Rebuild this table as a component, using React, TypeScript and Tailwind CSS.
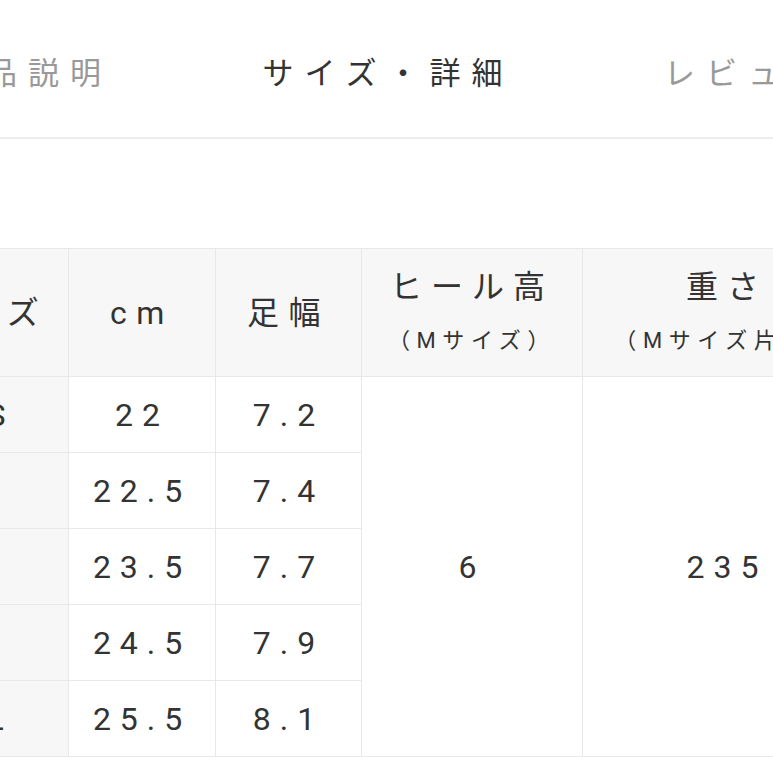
const tabs = [
  { label: "商品説明", active: false },
  { label: "サイズ・詳細", active: true },
  { label: "レビュー", active: false },
];

const rows = [
  { size: "SS", cm: "22", width: "7.2" },
  { size: "S", cm: "22.5", width: "7.4" },
  { size: "M", cm: "23.5", width: "7.7" },
  { size: "L", cm: "24.5", width: "7.9" },
  { size: "LL", cm: "25.5", width: "8.1" },
];

const font = { fontFamily: 'Roboto, "Noto Sans CJK JP", sans-serif' };

export default function App() {
  return (
    <div className="w-full overflow-hidden bg-white text-[#333]" style={font}>
      {/* tab bar */}
      <div className="border-b-2 border-[#ececec]">
        <div className="flex h-[137px] ml-[-152px] pt-[12px]">
          {tabs.map((tab) => (
            <div
              key={tab.label}
              className={`w-[360px] shrink-0 flex items-center justify-center text-[31px] tracking-[11px] ${
                tab.active ? "text-[#333]" : "text-[#999]"
              }`}
            >
              {tab.label}
            </div>
          ))}
        </div>
      </div>

      {/* size table */}
      <div className="pt-[109px] pb-[20px]">
        <table className="table-fixed border-collapse ml-[-96px] w-[1017px]">
          <colgroup>
            <col className="w-[164px]" />
            <col className="w-[147px]" />
            <col className="w-[146px]" />
            <col className="w-[221px]" />
            <col className="w-[339px]" />
          </colgroup>
          <thead>
            <tr className="h-[128px] bg-[#f7f7f7]">
              <th className="border border-[#e8e8e8] font-normal text-[32px] tracking-[0.3em] text-center">
                サイズ
              </th>
              <th className="border border-[#e8e8e8] font-normal text-[32px] tracking-[0.3em] text-center">
                cm
              </th>
              <th className="border border-[#e8e8e8] font-normal text-[32px] tracking-[0.3em] text-center">
                足幅
              </th>
              <th className="border border-[#e8e8e8] font-normal text-center">
                <div className="text-[32px] tracking-[0.28em] leading-[40px] mt-[-4px]">ヒール高</div>
                <div className="text-[22px] tracking-[0.3em] leading-[28px] mt-[20px]">（Mサイズ）</div>
              </th>
              <th className="border border-[#e8e8e8] font-normal text-center">
                <div className="w-[288px] mt-[-4px]">
                  <div className="text-[32px] tracking-[0.28em] leading-[40px]">重さ</div>
                  <div className="text-[22px] tracking-[0.3em] leading-[28px] mt-[20px] whitespace-nowrap">
                    （Mサイズ片足）
                  </div>
                </div>
              </th>
            </tr>
          </thead>
          <tbody>
            {rows.map((row, i) => (
              <tr key={row.size} className="h-[76px]">
                <td className="border border-[#e8e8e8] bg-[#f7f7f7] text-center text-[32px] tracking-[0.28em]">
                  {row.size}
                </td>
                <td className="border border-[#e8e8e8] text-center text-[32px] tracking-[0.28em]">
                  {row.cm}
                </td>
                <td className="border border-[#e8e8e8] text-center text-[32px] tracking-[0.28em]">
                  {row.width}
                </td>
                {i === 0 && (
                  <>
                    <td rowSpan={5} className="border border-[#e8e8e8] text-center text-[32px] tracking-[0.28em]">
                      6
                    </td>
                    <td rowSpan={5} className="border border-[#e8e8e8] text-[32px] tracking-[0.28em]">
                      <div className="w-[288px] text-center">235</div>
                    </td>
                  </>
                )}
              </tr>
            ))}
          </tbody>
        </table>
      </div>
    </div>
  );
}
